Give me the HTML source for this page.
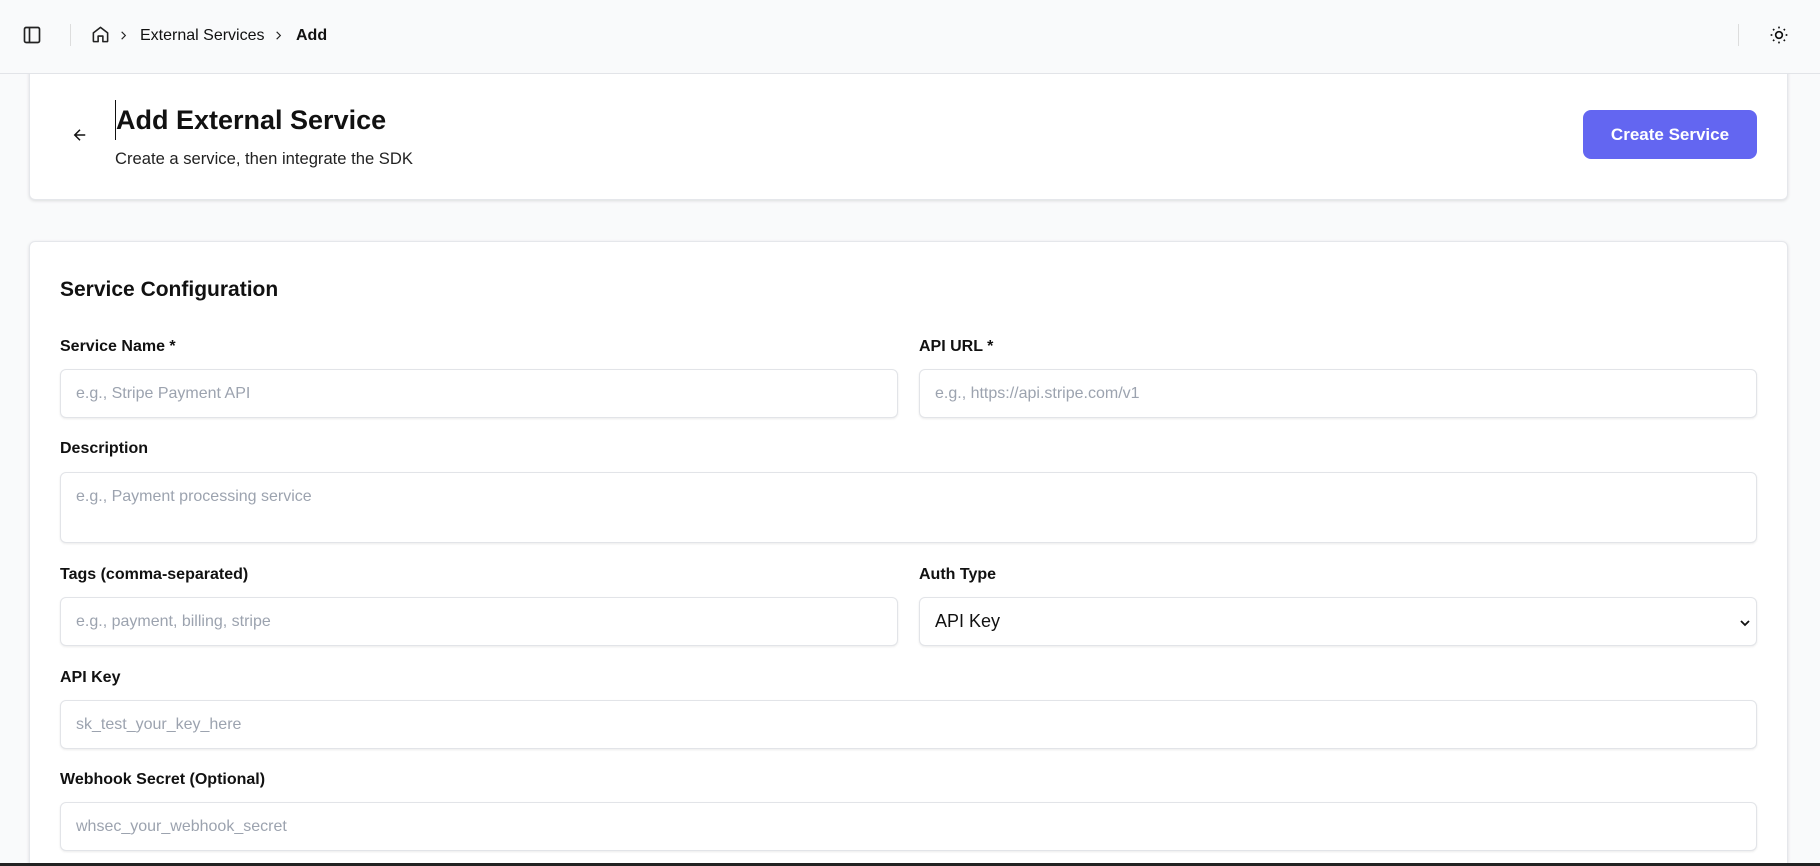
<!DOCTYPE html>
<html style="width:1820px;height:866px;overflow:hidden"><head><meta charset="utf-8"><style>
*{box-sizing:border-box;margin:0;padding:0}
body{width:1820px;height:866px;overflow:hidden;background:#f9fafb;font-family:"Liberation Sans",sans-serif;color:#111;position:relative}
.hdr{position:absolute;left:0;top:0;width:1820px;height:74px;background:#f9fafb;border-bottom:1px solid #e2e4e8;z-index:5}
.a{position:absolute}
.card{position:absolute;background:#fff;border:1px solid #e5e7eb;border-radius:6px;box-shadow:0 1px 3px rgba(0,0,0,.12)}
.lbl{position:absolute;font-size:16px;font-weight:700;color:#111}
.inp{position:absolute;height:49px;border:1px solid #e2e4e8;border-radius:6px;background:#fff;box-shadow:0 1px 2px rgba(0,0,0,.08);font-size:16px;color:#9ca3af;padding:0 15px;display:flex;align-items:center}
</style></head><body>
<div class="hdr">
<svg class="a" style="left:22px;top:25px" width="20" height="20" viewBox="0 0 24 24" fill="none" stroke="#222" stroke-width="2"><rect x="3" y="3" width="18" height="18" rx="2"/><path d="M9 3v18"/></svg>
<div class="a" style="left:70px;top:24px;width:1px;height:22px;background:#ddd"></div>
<svg class="a" style="left:91px;top:25px" width="19" height="19" viewBox="0 0 24 24" fill="none" stroke="#222" stroke-width="2" stroke-linejoin="round"><path d="M3 10l9-7 9 7v10a1 1 0 0 1-1 1h-5v-7h-6v7H4a1 1 0 0 1-1-1z"/></svg>
<svg class="a" style="left:118px;top:30px" width="11" height="11" viewBox="0 0 24 24" fill="none" stroke="#222" stroke-width="2.5"><path d="M8 4l8 8-8 8"/></svg>
<div class="a" style="left:140px;top:27px;font-size:16px;color:#111">External Services</div>
<svg class="a" style="left:273px;top:30px" width="11" height="11" viewBox="0 0 24 24" fill="none" stroke="#222" stroke-width="2.5"><path d="M8 4l8 8-8 8"/></svg>
<div class="a" style="left:296px;top:27px;font-size:16px;font-weight:700">Add</div>
<div class="a" style="left:1738px;top:24px;width:1px;height:22px;background:#ddd"></div>
<svg class="a" style="left:1769px;top:25px" width="20" height="20" viewBox="0 0 24 24" fill="none" stroke="#111" stroke-width="2"><circle cx="12" cy="12" r="4"/><path d="M12 2v2M12 20v2M4.9 4.9l1.4 1.4M17.7 17.7l1.4 1.4M2 12h2M20 12h2M4.9 19.1l1.4-1.4M17.7 6.3l1.4-1.4"/></svg>
</div>
<div class="card" style="left:29px;top:60px;width:1759px;height:140px;border-top:none;border-radius:0 0 6px 6px"></div>
<svg class="a" style="left:71px;top:126px" width="18" height="18" viewBox="0 0 24 24" fill="none" stroke="#111" stroke-width="2"><path d="M19 12H5M12 5l-7 7 7 7"/></svg>
<div class="a" style="left:115px;top:100px;width:1px;height:40px;background:#111"></div>
<div class="a" style="left:116px;top:105px;font-size:27px;font-weight:700">Add External Service</div>
<div class="a" style="left:115px;top:149px;font-size:16.6px;color:#222">Create a service, then integrate the SDK</div>
<div class="a" style="left:1583px;top:110px;width:174px;height:49px;background:#6366f1;border-radius:8px;color:#fff;font-size:17px;font-weight:700;display:flex;align-items:center;justify-content:center">Create Service</div>
<div class="card" style="left:29px;top:241px;width:1759px;height:640px"></div>
<div class="a" style="left:60px;top:278px;font-size:21px;font-weight:700">Service Configuration</div>
<div class="lbl" style="left:60px;top:338px">Service Name *</div>
<div class="lbl" style="left:919px;top:338px">API URL *</div>
<div class="inp" style="left:60px;top:369px;width:838px">e.g., Stripe Payment API</div>
<div class="inp" style="left:919px;top:369px;width:838px">e.g., https://api.stripe.com/v1</div>
<div class="lbl" style="left:60px;top:440px">Description</div>
<div class="inp" style="left:60px;top:472px;width:1697px;height:71px;align-items:flex-start;padding-top:15px">e.g., Payment processing service</div>
<div class="lbl" style="left:60px;top:566px">Tags (comma-separated)</div>
<div class="lbl" style="left:919px;top:566px">Auth Type</div>
<div class="inp" style="left:60px;top:597px;width:838px">e.g., payment, billing, stripe</div>
<div class="inp" style="left:919px;top:597px;width:838px;color:#111;font-size:18px">API Key<svg style="position:absolute;right:6px;top:20px" width="10" height="10" viewBox="0 0 10 10" fill="none" stroke="#111" stroke-width="1.8"><path d="M1 3l4 4 4-4"/></svg></div>
<div class="lbl" style="left:60px;top:669px">API Key</div>
<div class="inp" style="left:60px;top:700px;width:1697px">sk_test_your_key_here</div>
<div class="lbl" style="left:60px;top:771px">Webhook Secret (Optional)</div>
<div class="inp" style="left:60px;top:802px;width:1697px">whsec_your_webhook_secret</div>
<div class="a" style="left:0;top:863px;width:1820px;height:3px;background:#222;z-index:6"></div>
</body></html>
